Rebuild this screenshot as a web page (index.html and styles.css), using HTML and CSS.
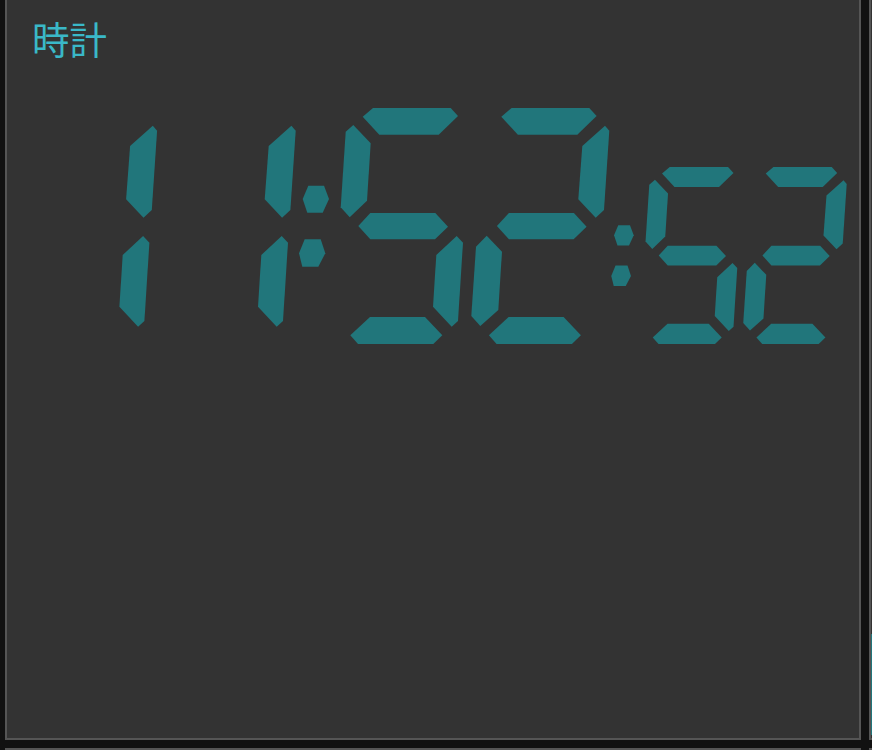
FILE: index.html
```html
<!DOCTYPE html>
<html lang="ja">
<head>
<meta charset="utf-8">
<title>時計</title>
<link rel="stylesheet" href="styles.css">
</head>
<body>
<div class="grid">
  <section class="panel">
    <h1 class="title">時計</h1>
    <svg class="clock" viewBox="7 62 852 300" width="852" height="300" xmlns="http://www.w3.org/2000/svg" xmlns:xlink="http://www.w3.org/1999/xlink">
      <defs>
        <polygon id="sa" points="32.7,116.7 43,108 120.7,108 128,116 108.7,134.7 49.3,134.7"/>
        <polygon id="sb" points="113.7,146 136.4,125.7 140.7,130.7 135.4,210 127.1,217.7 109.7,199.3"/>
        <polygon id="sc" points="126.7,236 133,242.7 128,321 121.7,326.7 103,306.7 106.3,255"/>
        <polygon id="sd" points="20.3,335.3 40,317 95,317 112.3,335.3 103.3,344 28,344"/>
        <polygon id="se" points="18.1,235.7 33.4,251.7 29.7,310 11.7,326 2.7,316 7.4,246.7"/>
        <polygon id="sf" points="23.3,125 40.7,143.3 37,200.7 19.7,217.3 10.7,207.3 15.7,131.7"/>
        <polygon id="sg" points="28.3,226 40.3,213 105.3,213 118,226.7 105,239.3 40.3,239.3"/>
        <g id="colon">
          <polygon points="302.7,199 308.3,185.7 324,185.7 329,199 322.7,212.7 307.3,212.7"/>
          <polygon points="299,253.3 304.7,239.3 320.7,239.3 325.3,253.3 318.3,266.7 302.3,266.7"/>
        </g>
        <g id="d1"><use href="#sb"/><use href="#sc"/></g>
        <g id="d5"><use href="#sa"/><use href="#sf"/><use href="#sg"/><use href="#sc"/><use href="#sd"/></g>
        <g id="d2"><use href="#sa"/><use href="#sb"/><use href="#sg"/><use href="#se"/><use href="#sd"/></g>
      </defs>
      <g class="seg">
        <use href="#d1" x="16.4"/>
        <use href="#d1" x="155"/>
        <use href="#colon"/>
        <use href="#d5" x="330"/>
        <use href="#d2" x="468.6"/>
        <g transform="translate(387,86) scale(0.75)"><use href="#colon"/></g>
        <g transform="translate(637.5,86) scale(0.75)"><use href="#d5"/></g>
        <g transform="translate(741.2,86) scale(0.75)"><use href="#d2"/></g>
      </g>
    </svg>
  </section>
  <section class="panel">
    <div class="peek"></div>
  </section>
  <section class="panel panel-next"></section>
  <section class="panel panel-next"></section>
</div>
</body>
</html>
```

FILE: styles.css
```css
html, body {
  margin: 0;
  padding: 0;
  overflow: hidden;
  background: #111111;
}

.grid {
  display: grid;
  grid-template-columns: 856px 856px;
  grid-auto-rows: 740px;
  column-gap: 8px;
  row-gap: 8px;
  padding-left: 5px;
}

.panel {
  box-sizing: border-box;
  background: #333333;
  border: 2px solid #555555;
  border-top: 0;
  overflow: hidden;
}

.panel-next {
  border-top: 2px solid #555555;
}

.title {
  margin: 0;
  padding: 12px 0 0 25px;
  height: 50px;
  box-sizing: content-box;
  font-family: "Noto Sans CJK JP", "Noto Sans", sans-serif;
  font-weight: 400;
  font-size: 37.5px;
  line-height: 52px;
  color: #3ab8c8;
  overflow: visible;
}

.clock {
  display: block;
}

.seg {
  fill: #21767b;
}

.peek {
  margin-top: 634px;
  width: 2px;
  height: 101px;
  background: #21767b;
}
```
